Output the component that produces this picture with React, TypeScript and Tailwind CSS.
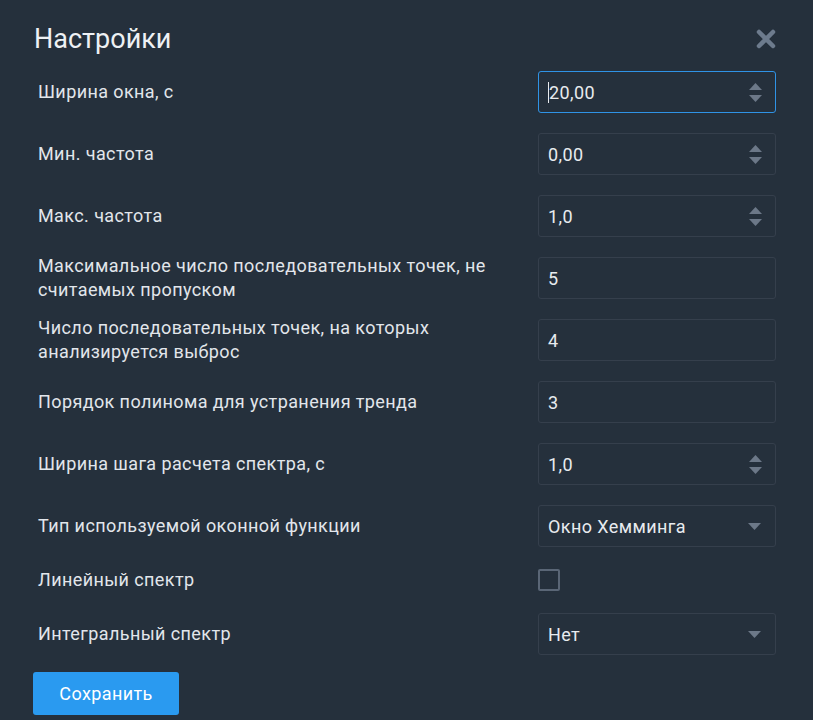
import type { ReactNode } from 'react'

const font = { fontFamily: 'Roboto, "Noto Sans", sans-serif' }

function Spinner() {
  return (
    <div className="flex flex-col items-center gap-[5px] mr-[13px]">
      <svg width="13" height="7" viewBox="0 0 13 7">
        <path d="M6.5 0 L13 7 L0 7 Z" fill="#6c7888" />
      </svg>
      <svg width="13" height="7" viewBox="0 0 13 7">
        <path d="M0 0 L13 0 L6.5 7 Z" fill="#6c7888" />
      </svg>
    </div>
  )
}

function Caret() {
  return (
    <svg width="13" height="7" viewBox="0 0 13 7" className="mr-[14px]">
      <path d="M0 0 L13 0 L6.5 7 Z" fill="#6c7888" />
    </svg>
  )
}

function Field({
  value,
  spin,
  select,
  focused
}: {
  value: string
  spin?: boolean
  select?: boolean
  focused?: boolean
}) {
  return (
    <div
      className={`h-[42px] w-[238px] flex items-center justify-between rounded-[3px] border ${
        focused ? 'border-[#2f93e6]' : 'border-[#353f4c]'
      }`}
    >
      <div className="pl-[9px] flex items-center text-[18px] tracking-[0.4px] text-[#e8ebef]">
        {focused && <span className="inline-block w-px h-[21px] bg-[#e8ebef]" />}
        <span>{value}</span>
      </div>
      {spin && <Spinner />}
      {select && <Caret />}
    </div>
  )
}

function Row({
  label,
  children,
  h = 'h-[62px]'
}: {
  label: ReactNode
  children: ReactNode
  h?: string
}) {
  return (
    <div className={`flex items-center justify-between ${h}`}>
      <div className="pl-[4px] w-[480px] text-[18px] tracking-[0.4px] leading-[24px] text-[#e2e6eb]">
        {label}
      </div>
      {children}
    </div>
  )
}

export default function App() {
  return (
    <div
      className="w-[813px] h-[720px] bg-[#25303c] overflow-hidden pl-[34px] pr-[37px] pt-[17px]"
      style={font}
    >
      <div className="flex items-center justify-between h-[44px]">
        <h1 className="text-[27px] text-[#eef1f4] font-normal">Настройки</h1>
        <svg width="20" height="20" viewBox="0 0 20 20">
          <path
            d="M3 3 L17 17 M17 3 L3 17"
            stroke="#6d7b8d"
            strokeWidth="4.5"
            strokeLinecap="round"
          />
        </svg>
      </div>

      <div className="flex flex-col">
        <Row label="Ширина окна, с">
          <Field value="20,00" spin focused />
        </Row>
        <Row label="Мин. частота">
          <Field value="0,00" spin />
        </Row>
        <Row label="Макс. частота">
          <Field value="1,0" spin />
        </Row>
        <Row label="Максимальное число последовательных точек, не считаемых пропуском">
          <Field value="5" />
        </Row>
        <Row label="Число последовательных точек, на которых анализируется выброс">
          <Field value="4" />
        </Row>
        <Row label="Порядок полинома для устранения тренда">
          <Field value="3" />
        </Row>
        <Row label="Ширина шага расчета спектра, с">
          <Field value="1,0" spin />
        </Row>
        <Row label="Тип используемой оконной функции">
          <Field value="Окно Хемминга" select />
        </Row>
        <Row label="Линейный спектр" h="h-[46px]">
          <div className="w-[238px]">
            <div className="w-[22px] h-[22px] border-2 border-[#5a6676] rounded-[2px]" />
          </div>
        </Row>
        <Row label="Интегральный спектр">
          <Field value="Нет" select />
        </Row>
      </div>

      <button className="mt-[7px] -ml-px w-[146px] h-[43px] rounded-[3px] bg-[#2a9af0] text-white text-[18px] tracking-[0.4px]">
        Сохранить
      </button>
    </div>
  )
}
